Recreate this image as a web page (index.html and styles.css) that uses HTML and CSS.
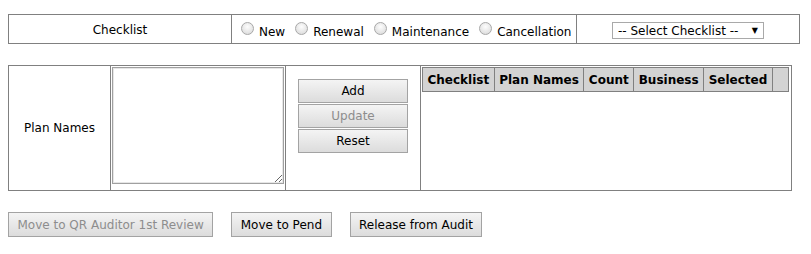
FILE: index.html
```html
<!DOCTYPE html>
<html lang="en">
<head>
  <meta charset="UTF-8" />
  <title>Checklist Plans</title>
  <link rel="stylesheet" href="styles.css">
</head>
<body>
  <div class="page">
    <div class="bar">
      <div class="cell bar-label">Checklist</div>
      <div class="cell bar-types">
        <label class="opt"><input type="radio" name="type" /> New</label>
        <label class="opt"><input type="radio" name="type" /> Renewal</label>
        <label class="opt"><input type="radio" name="type" /> Maintenance</label>
        <label class="opt"><input type="radio" name="type" /> Cancellation</label>
      </div>
      <div class="cell bar-select">
        <span class="select-wrap">
          <select class="checklist-select">
            <option>-- Select Checklist --</option>
          </select>
        </span>
      </div>
    </div>

    <div class="plans">
      <div class="cell plans-label">Plan Names</div>
      <div class="cell plans-input"><textarea></textarea></div>
      <div class="cell plans-actions">
        <button class="btn">Add</button>
        <button class="btn" disabled>Update</button>
        <button class="btn">Reset</button>
      </div>
      <div class="cell plans-grid">
        <table class="grid">
          <thead>
            <tr>
              <th>Checklist</th>
              <th>Plan Names</th>
              <th>Count</th>
              <th>Business</th>
              <th>Selected</th>
              <th class="grid-pad"></th>
            </tr>
          </thead>
        </table>
      </div>
    </div>

    <div class="actions">
      <button class="btn btn-lg" disabled>Move to QR Auditor 1st Review</button>
      <button class="btn btn-lg">Move to Pend</button>
      <button class="btn btn-lg">Release from Audit</button>
    </div>
  </div>
</body>
</html>
```

FILE: styles.css
```css
* {
  box-sizing: border-box;
}
body {
  margin: 8px;
  font-family: "DejaVu Sans", Verdana, sans-serif;
  font-size: 12px;
  color: #000;
  background: #fff;
}
.page {
  padding-top: 6px;
}

/* top checklist bar */
.bar {
  display: flex;
  width: 792px;
  height: 30px;
  border: 1px solid #808080;
}
.bar .cell + .cell,
.plans .cell + .cell {
  border-left: 1px solid #808080;
}
.bar-label {
  width: 222px;
  display: flex;
  align-items: center;
  justify-content: center;
  padding-top: 1px;
}
.bar-types {
  width: 345px;
  display: flex;
  align-items: center;
  padding-left: 9px;
}
.opt {
  display: flex;
  align-items: center;
  gap: 5px;
  margin-right: 10px;
  padding-top: 5px;
}
.opt input[type="radio"] {
  -webkit-appearance: none;
  appearance: none;
  width: 13px;
  height: 13px;
  margin: -7px 0 0 0;
  border: 1px solid #a8a8a8;
  border-radius: 50%;
  background: radial-gradient(circle at 50% 35%, #fdfdfd, #d6d6d6);
}
.bar-select {
  flex: 1;
  display: flex;
  align-items: center;
  justify-content: center;
  padding-top: 2px;
}
.select-wrap {
  position: relative;
  display: inline-block;
}
.select-wrap::after {
  content: "\25BC";
  position: absolute;
  right: 6px;
  top: 4px;
  font-size: 8px;
  pointer-events: none;
}
.checklist-select {
  -webkit-appearance: none;
  appearance: none;
  width: 152px;
  height: 17px;
  padding: 1px 0 0 5px;
  border: 1px solid #a9a9a9;
  border-radius: 0;
  background: #fff;
  font: inherit;
  color: #000;
}

/* plan names row */
.plans {
  display: flex;
  width: 784px;
  height: 126px;
  margin-top: 21px;
  border: 1px solid #808080;
}
.plans-label {
  width: 101px;
  display: flex;
  align-items: center;
  justify-content: center;
}
.plans-input {
  width: 175px;
  padding: 1px 0 0 1px;
}
.plans-input textarea {
  display: block;
  width: 172px;
  height: 117px;
  margin: 0;
  border: 1px solid #a0a0a0;
  box-shadow: inset 0 0 0 1px #e6e6e6;
  font: inherit;
}
.plans-actions {
  width: 135px;
  display: flex;
  flex-direction: column;
  align-items: center;
  gap: 1px;
  padding-top: 13px;
}
.plans-actions .btn {
  width: 110px;
}
.plans-grid {
  flex: 1;
  padding: 1px;
}
.grid {
  border-collapse: collapse;
}
.grid th {
  height: 24px;
  padding: 0 4.5px;
  border: 1px solid #808080;
  background: #d3d3d3;
  text-align: left;
  font-weight: bold;
  white-space: nowrap;
}
.grid th.grid-pad {
  width: 16px;
  min-width: 16px;
  padding: 0;
}

/* buttons */
.btn {
  height: 24px;
  padding: 0 8px;
  border: 1px solid #a3a3a3;
  border-radius: 0;
  background: linear-gradient(#f4f4f4, #dcdcdc);
  font: inherit;
  color: #000;
}
.btn:disabled {
  color: #8d8d8d;
}
.actions {
  display: flex;
  gap: 18px;
  margin-top: 21px;
}
.btn-lg {
  height: 25px;
  padding: 0 8.5px;
}
```
